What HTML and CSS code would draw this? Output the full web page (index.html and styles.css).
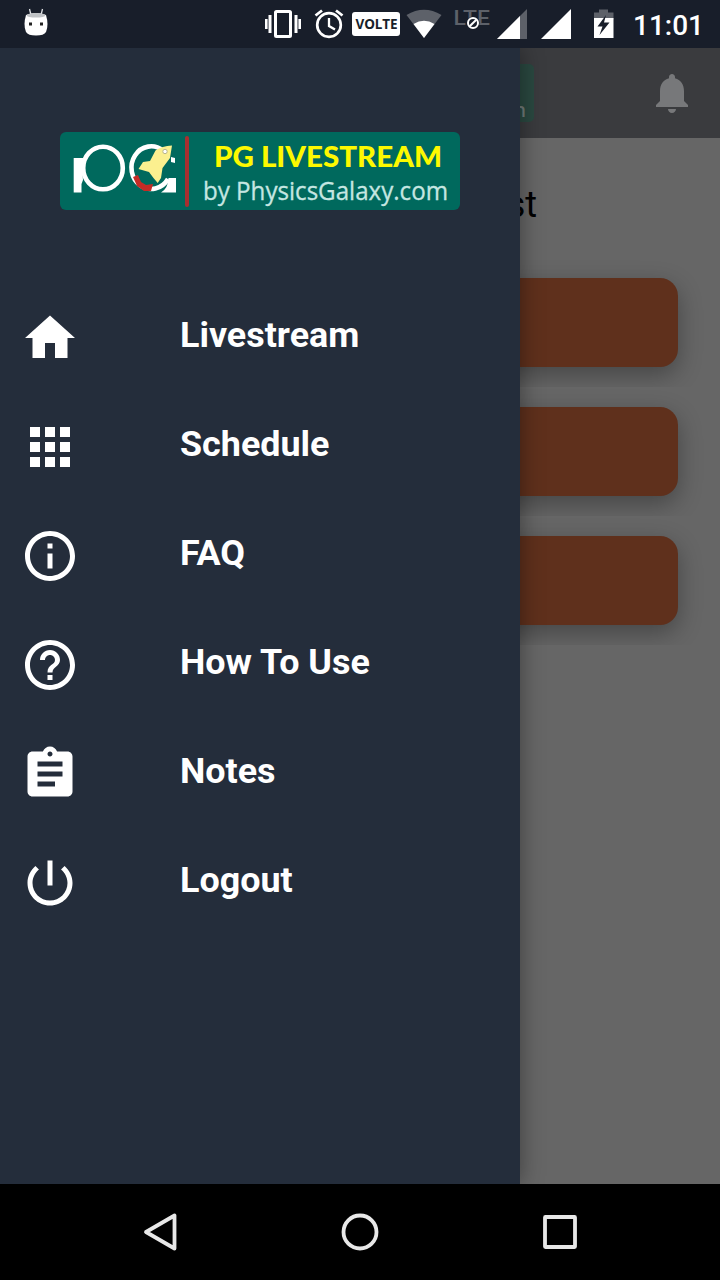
FILE: index.html
```html
<!DOCTYPE html>
<html lang="en">
<head>
<meta charset="utf-8">
<title>PG Livestream</title>
<link rel="stylesheet" href="styles.css">
</head>
<body>
<div class="screen">
  <header class="status">
    <svg class="status-icons" width="720" height="48" viewBox="0 0 720 48">
      <!-- marshmallow notification -->
      <path d="M29.500 9l1.500 6M42.500 9l-1.500 6" stroke="#dfe1e4" stroke-width="1.300"/>
      <path d="M26 15Q36 11 46 15Q49 25 46 32Q44 35.500 36 35.500T26 32Q23 25 26 15z" fill="#fff"/>
      <ellipse cx="36" cy="15.300" rx="9.500" ry="2.300" fill="#bfc2c5"/>
      <path d="M29 22.500h3v3h-3zM40 22.500h3v3h-3z" fill="#222"/>
      <!-- vibrate -->
      <g fill="none" stroke="#fff">
        <rect x="275.500" y="11.500" width="15" height="25" rx="1" stroke-width="3"/>
        <path d="M270 15v18M296 15v18" stroke-width="3"/>
        <path d="M266.300 19v10M299.700 19v10" stroke-width="2.600"/>
      </g>
      <!-- alarm -->
      <g fill="none" stroke="#fff">
        <circle cx="329" cy="25" r="11.800" stroke-width="2.700"/>
        <path d="M315.500 15.500l6.500-5M342.500 15.500l-6.500-5" stroke-width="2.800"/>
        <path d="M329 18v8l6 3.500" stroke-width="2.300"/>
      </g>
      <!-- volte -->
      <rect x="352" y="12" width="48" height="24" rx="3" fill="#fff"/>
      <text class="volte" x="355.500" y="29" textLength="42" lengthAdjust="spacingAndGlyphs">VOLTE</text>
      <!-- wifi -->
      <path d="M406.500 15Q424 4.500 441.500 15L424 38z" fill="#5d6169"/>
      <path d="M413.500 24Q424 17.500 434.500 24L424 38z" fill="#fff"/>
      <!-- lte -->
      <text class="lte" x="453.500" y="25" textLength="36.500" lengthAdjust="spacingAndGlyphs">LTE</text>
      <circle cx="473" cy="23" r="6.500" fill="#181e2a"/>
      <g fill="none" stroke="#fff" stroke-width="2"><circle cx="473" cy="23" r="5"/><path d="M469.700 26.300l6.600-6.600"/></g>
      <!-- signal -->
      <path d="M527 9v30h-30z" fill="#5d6169"/>
      <path d="M520 16v23h-23z" fill="#fff"/>
      <path d="M571 9v30h-30z" fill="#fff"/>
      <!-- battery -->
      <path d="M599 9.500h9v3h5.500v7h-19.500v-7h5z" fill="#5d6169"/>
      <path d="M594 18h19.500v20H594z" fill="#fff"/>
      <path d="M606 15l-8.500 11.500h5l-3 8.500 10-12.500h-5.500z" fill="#181e2a"/>
      <text class="clock" x="633" y="35" textLength="71" lengthAdjust="spacingAndGlyphs">11:01</text>
    </svg>
  </header>

  <main class="stage">
    <section class="page">
      <div class="appbar">
        <div class="appbar-logo">n</div>
        <svg class="bell" width="48" height="48" viewBox="0 0 24 24"><path d="M12 22c1.100 0 2-.9 2-2h-4c0 1.100.89 2 2 2zm6-6v-5c0-3.070-1.640-5.640-4.500-6.320V4c0-.83-.67-1.500-1.500-1.500s-1.500.67-1.500 1.500v.68C7.630 5.360 6 7.920 6 11v5l-2 2v1h16v-1l-2-2z"/></svg>
      </div>
      <h1 class="title">st</h1>
      <div class="card-slot"><div class="card"></div></div>
      <div class="card-slot"><div class="card"></div></div>
      <div class="card-slot"><div class="card"></div></div>
    </section>

    <aside class="drawer">
      <svg class="logo" width="400" height="78" viewBox="60 132 400 78">
        <rect x="60" y="132" width="400" height="78" rx="6" fill="#00695d"/>
        <g fill="none" stroke="#fff" stroke-width="4.600">
          <ellipse cx="103" cy="168" rx="19.800" ry="21.300"/>
          <path d="M163 150.500A19.800 21.300 0 1 0 168 179"/>
        </g>
        <path d="M73.700 158H84l-2 10 1 12-1.500 4v8.500h-7.800zM168.500 178h7.500v14.500h-15q7-4 7.500-14.500zM171 157l4 1v5l-4-1z" fill="#fff"/>
        <path d="M133 177l5-2 3 7 5 3 7-1-2 7-7 0-7-5z" fill="#c52b26"/>
        <path d="M172 145.500Q162 146 155.500 150.500L150 161L143 162L138.500 169L149 172L153.500 178L157.700 183L161 178L162.500 168L170 158Z" fill="#fbf08f"/>
        <circle cx="165" cy="151.500" r="2.200" fill="#fff" stroke="#b9b58a" stroke-width="1"/>
        <path d="M187 138v67" stroke="#a82f30" stroke-width="4" stroke-linecap="round"/>
        <text class="logo-name" x="214" y="167" textLength="228" lengthAdjust="spacingAndGlyphs">PG LIVESTREAM</text>
        <text class="logo-by" x="203" y="199.500" textLength="245" lengthAdjust="spacingAndGlyphs">by PhysicsGalaxy.com</text>
      </svg>
      <nav class="menu">
        <a class="item"><svg class="icon" viewBox="0 0 24 24"><path d="M10 20v-6h4v6h5v-8h3L12 3 2 12h3v8z"/></svg><span class="label">Livestream</span></a>
        <a class="item"><svg class="icon" viewBox="0 0 24 24"><path d="M4 8h4V4H4v4zm6 12h4v-4h-4v4zm-6 0h4v-4H4v4zm0-6h4v-4H4v4zm6 0h4v-4h-4v4zm6-10v4h4V4h-4zm-6 4h4V4h-4v4zm6 6h4v-4h-4v4zm0 6h4v-4h-4v4z"/></svg><span class="label">Schedule</span></a>
        <a class="item"><svg class="icon" viewBox="0 0 24 24"><path d="M11 17h2v-6h-2v6zm1-15C6.480 2 2 6.480 2 12s4.480 10 10 10 10-4.480 10-10S17.520 2 12 2zm0 18c-4.410 0-8-3.590-8-8s3.590-8 8-8 8 3.590 8 8-3.590 8-8 8zM11 9h2V7h-2v2z"/></svg><span class="label">FAQ</span></a>
        <a class="item"><svg class="icon" viewBox="0 0 24 24"><path d="M11 18h2v-2h-2v2zm1-16C6.480 2 2 6.480 2 12s4.480 10 10 10 10-4.480 10-10S17.520 2 12 2zm0 18c-4.410 0-8-3.590-8-8s3.590-8 8-8 8 3.590 8 8-3.590 8-8 8zm0-14c-2.210 0-4 1.790-4 4h2c0-1.100.9-2 2-2s2 .9 2 2c0 2-3 1.750-3 5h2c0-2.250 3-2.500 3-5 0-2.210-1.790-4-4-4z"/></svg><span class="label">How To Use</span></a>
        <a class="item"><svg class="icon" viewBox="0 0 24 24"><path d="M19 3h-4.180C14.400 1.840 13.300 1 12 1c-1.300 0-2.400.84-2.820 2H5c-1.100 0-2 .9-2 2v14c0 1.100.9 2 2 2h14c1.100 0 2-.9 2-2V5c0-1.100-.9-2-2-2zm-7 0c.55 0 1 .45 1 1s-.45 1-1 1-1-.45-1-1 .45-1 1-1zm2 14H7v-2h7v2zm3-4H7v-2h10v2zm0-4H7V7h10v2z"/></svg><span class="label">Notes</span></a>
        <a class="item"><svg class="icon" viewBox="0 0 24 24"><path d="M13 3h-2v10h2V3zm4.830 2.170l-1.420 1.420C17.990 7.860 19 9.810 19 12c0 3.870-3.130 7-7 7s-7-3.130-7-7c0-2.190 1.010-4.140 2.580-5.420L6.170 5.170C4.230 6.820 3 9.260 3 12c0 4.970 4.030 9 9 9s9-4.030 9-9c0-2.740-1.230-5.180-3.170-6.830z"/></svg><span class="label">Logout</span></a>
      </nav>
    </aside>
  </main>

  <footer class="navbar">
    <svg class="nav-icon" viewBox="0 0 40 40"><path d="M6 20L34.500 3.500v33z"/></svg>
    <svg class="nav-icon" viewBox="0 0 40 40"><circle cx="20" cy="20" r="16.500"/></svg>
    <svg class="nav-icon" viewBox="0 0 40 40"><rect x="5" y="5" width="30" height="30" rx="0.500"/></svg>
  </footer>
</div>
</body>
</html>
```
FILE: styles.css
```css
body {
  margin: 0;
  font-family: Roboto, "Liberation Sans", sans-serif;
}

.screen {
  width: 720px;
  height: 1280px;
  display: flex;
  flex-direction: column;
  overflow: hidden;
  background: #000;
}

.status {
  height: 48px;
  background: #181e2a;
}

.status-icons {
  display: block;
}

.volte {
  font: 700 15px "Noto Sans", sans-serif;
  fill: #181e2a;
}

.lte {
  font: 500 21px Roboto, sans-serif;
  fill: #5d6169;
}

.clock {
  font: 500 28px Roboto, sans-serif;
  fill: #fff;
}

.stage {
  position: relative;
  height: 1136px;
  overflow: hidden;
}

.page {
  height: 100%;
  background: #666;
}

.appbar {
  height: 90px;
  box-sizing: border-box;
  padding: 0 24px 0 186px;
  display: flex;
  align-items: center;
  justify-content: space-between;
  background: #3a3b3e;
}

.appbar-logo {
  width: 348px;
  height: 58px;
  box-sizing: border-box;
  padding: 30px 8px 0 0;
  border-radius: 5px;
  background: #2a4840;
  color: #717b79;
  font: 500 20px/32px "Noto Sans", sans-serif;
  text-align: right;
}

.bell {
  fill: #77787a;
}

.title {
  margin: 0;
  height: 120px;
  box-sizing: border-box;
  padding: 46px 183px 0 0;
  font-size: 36px;
  line-height: 42px;
  font-weight: 400;
  text-align: right;
  color: #000;
}

.card-slot {
  height: 129px;
  box-sizing: border-box;
  padding: 20px 42px;
  overflow: hidden;
}

.card {
  height: 89px;
  border-radius: 18px;
  background: #5f301c;
  box-shadow: 0 8px 24px rgba(0, 0, 0, 0.32);
}

.drawer {
  position: absolute;
  top: 0;
  left: 0;
  width: 520px;
  height: 100%;
  background: #242d3b;
  box-shadow: 0 0 22px rgba(0, 0, 0, 0.4);
}

.logo {
  display: block;
  margin: 84px 60px 73.5px;
}

.logo-name {
  font: 900 28.5px Lato, sans-serif;
  fill: #fdf900;
}

.logo-by {
  font: 400 25.5px "Open Sans", sans-serif;
  fill: #c5e6e1;
  stroke: #c5e6e1;
  stroke-width: 0.3px;
}

.item {
  height: 109px;
  padding-left: 20px;
  display: flex;
  align-items: center;
  gap: 100px;
}

.icon {
  width: 60px;
  height: 60px;
  fill: #fff;
}

.label {
  padding-bottom: 6px;
  font-size: 35.9px;
  line-height: 42px;
  font-weight: 700;
  color: #fff;
}

.navbar {
  height: 96px;
  box-sizing: border-box;
  padding: 0 140px;
  display: flex;
  align-items: center;
  justify-content: space-between;
  background: #000;
}

.nav-icon {
  width: 40px;
  height: 40px;
  fill: none;
  stroke: #e8e8e8;
  stroke-width: 3.8;
  stroke-linejoin: round;
}
```
